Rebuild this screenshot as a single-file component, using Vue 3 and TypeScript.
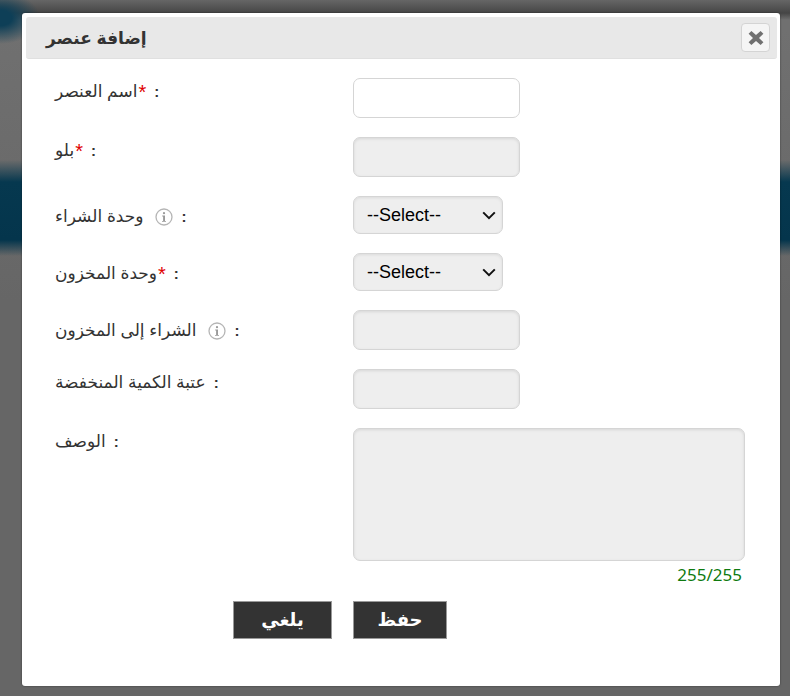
<script setup lang="ts">
interface Row {
  label: string
  kind: 'input' | 'select' | 'textarea'
  required?: boolean
  info?: boolean
  enabled?: boolean
}

const rows: Row[] = [
  { label: 'اسم العنصر', kind: 'input', required: true, enabled: true },
  { label: 'بلو', kind: 'input', required: true },
  { label: 'وحدة الشراء', kind: 'select', info: true },
  { label: 'وحدة المخزون', kind: 'select', required: true },
  { label: 'الشراء إلى المخزون', kind: 'input', info: true },
  { label: 'عتبة الكمية المنخفضة', kind: 'input' },
  { label: 'الوصف', kind: 'textarea' }
]

function isLow(row: Row) {
  return row.kind === 'select' || row.info
}
</script>

<template>
  <div class="page">
    <div class="modal">
      <header class="head">
        <h2 class="title">إضافة عنصر</h2>
        <button class="close" type="button" aria-label="close">
          <svg width="16" height="16" viewBox="0 0 16 16">
            <path d="M3.4 1 8 5 12.6 1 15.4 3.8 11 8 15.4 12.2 12.6 15 8 11 3.4 15 .6 12.2 5 8 .6 3.8Z" fill="#707070" />
          </svg>
        </button>
      </header>

      <form class="form" @submit.prevent>
        <div v-for="row in rows" :key="row.label" class="row">
          <label class="label" :class="{ low: isLow(row) }">
            <span>{{ row.label }}</span>
            <span v-if="row.required" class="req">*</span>
            <svg v-if="row.info" class="info" width="18" height="18" viewBox="0 0 18 18">
              <circle cx="9" cy="9" r="8" fill="none" stroke="#b5b5b5" stroke-width="1.3" />
              <circle cx="9" cy="5.2" r="1.1" fill="#999" />
              <path d="M7.2 7.6h2.8v5.3h1v.9H7v-.9h1.1V8.5h-.9Z" fill="#999" />
            </svg>
            <span class="colon">:</span>
          </label>
          <div class="control">
            <input v-if="row.kind === 'input'" class="field" :class="{ off: !row.enabled }" type="text" :disabled="!row.enabled" />
            <select v-else-if="row.kind === 'select'" class="pick">
              <option>--Select--</option>
            </select>
            <template v-else>
              <textarea class="area" disabled></textarea>
              <div class="count">255/255</div>
            </template>
          </div>
        </div>

        <div class="actions">
          <button class="btn cancel" type="button">يلغي</button>
          <button class="btn save" type="submit">حفظ</button>
        </div>
      </form>
    </div>
  </div>
</template>

<style>
html,
body {
  margin: 0;
  height: 100%;
  overflow: hidden;
}
</style>

<style scoped>
.page {
  box-sizing: border-box;
  width: 790px;
  height: 696px;
  padding: 13px 10px 10px 22px;
  font-family: "Liberation Sans", "DejaVu Sans", sans-serif;
  background:
    radial-gradient(40px 26px at 0 18px, #0e3f57 30%, rgba(14, 63, 87, 0) 100%),
    linear-gradient(180deg, #666 0, #454545 13px, rgba(90, 90, 90, 0) 20px),
    linear-gradient(180deg, rgba(4, 53, 76, 0) 160px, #06384f 182px, #04354c 240px, rgba(4, 53, 76, 0) 256px),
    linear-gradient(180deg, #707070 30px, #666 300px, #666 696px);
}

.modal {
  box-sizing: border-box;
  height: 673px;
  padding: 4px 3px 0 4px;
  background: #fff;
  border-radius: 3px;
  box-shadow: 0 0 2px rgba(0, 0, 0, 0.5);
}

.head {
  box-sizing: border-box;
  height: 42px;
  display: flex;
  align-items: center;
  justify-content: space-between;
  padding: 0 7px 0 20px;
  background: #e8e8e8;
  border-radius: 3px;
  border-bottom: 1px solid #e0e0e0;
}

.title {
  margin: 2px 0 0;
  font-size: 17px;
  font-weight: 700;
  color: #333;
}

.close {
  box-sizing: border-box;
  width: 29px;
  height: 29px;
  padding: 0;
  display: flex;
  align-items: center;
  justify-content: center;
  background: #f5f5f5;
  border: 1px solid #d4d4d4;
  border-radius: 4px;
}

.form {
  display: flex;
  flex-direction: column;
  gap: 19px;
  padding: 19px 0 0 29px;
}

.row {
  display: flex;
  align-items: flex-start;
}

.label {
  width: 298px;
  flex-shrink: 0;
  display: flex;
  align-items: center;
  padding-top: 4px;
  font-size: 17px;
  line-height: 20px;
  color: #333;
}

.low {
  padding-top: 11px;
}

.req {
  color: #e00000;
  font-size: 20px;
  margin-left: 1px;
}

.colon {
  margin-left: 8px;
  font-weight: 700;
  font-size: 15px;
}

.info {
  margin-left: 12px;
}

.control {
  display: flex;
  flex-direction: column;
}

.field {
  box-sizing: border-box;
  display: block;
  width: 167px;
  height: 40px;
  background: #fff;
  border: 1px solid #d5d5d5;
  border-radius: 7px;
}

.off {
  background: #eee;
  box-shadow: inset 0 1px 3px rgba(0, 0, 0, 0.1);
}

.pick {
  box-sizing: border-box;
  display: block;
  width: 150px;
  height: 38px;
  padding: 0 8px 0 13px;
  font-family: "Liberation Sans", sans-serif;
  font-size: 18px;
  color: #000;
  appearance: none;
  background: #eee url("data:image/svg+xml,%3Csvg xmlns='http://www.w3.org/2000/svg' width='14' height='9' viewBox='0 0 14 9'%3E%3Cpath d='M1.2 1.4 7 7.2l5.8-5.8' fill='none' stroke='%23111' stroke-width='2'/%3E%3C/svg%3E") no-repeat right 6px center;
  border: 1px solid #d5d5d5;
  border-radius: 7px;
  box-shadow: inset 0 1px 3px rgba(0, 0, 0, 0.08);
}

.area {
  box-sizing: border-box;
  display: block;
  width: 392px;
  height: 133px;
  resize: none;
  background: #eee;
  border: 1px solid #d5d5d5;
  border-radius: 7px;
  box-shadow: inset 0 1px 3px rgba(0, 0, 0, 0.1);
}

.count {
  margin-top: 4px;
  padding-right: 3px;
  text-align: right;
  font-family: "Noto Sans", sans-serif;
  font-size: 17px;
  line-height: 20px;
  color: #0f7a0f;
}

.actions {
  display: flex;
  gap: 21px;
  margin-top: -3px;
  padding-left: 178px;
}

.btn {
  box-sizing: border-box;
  height: 38px;
  padding: 0;
  color: #fff;
  background: #333;
  border: 1px solid #999;
  font-family: "Liberation Sans", "DejaVu Sans", sans-serif;
  font-size: 18px;
  font-weight: 700;
}

.cancel {
  width: 99px;
}

.save {
  width: 94px;
}
</style>
